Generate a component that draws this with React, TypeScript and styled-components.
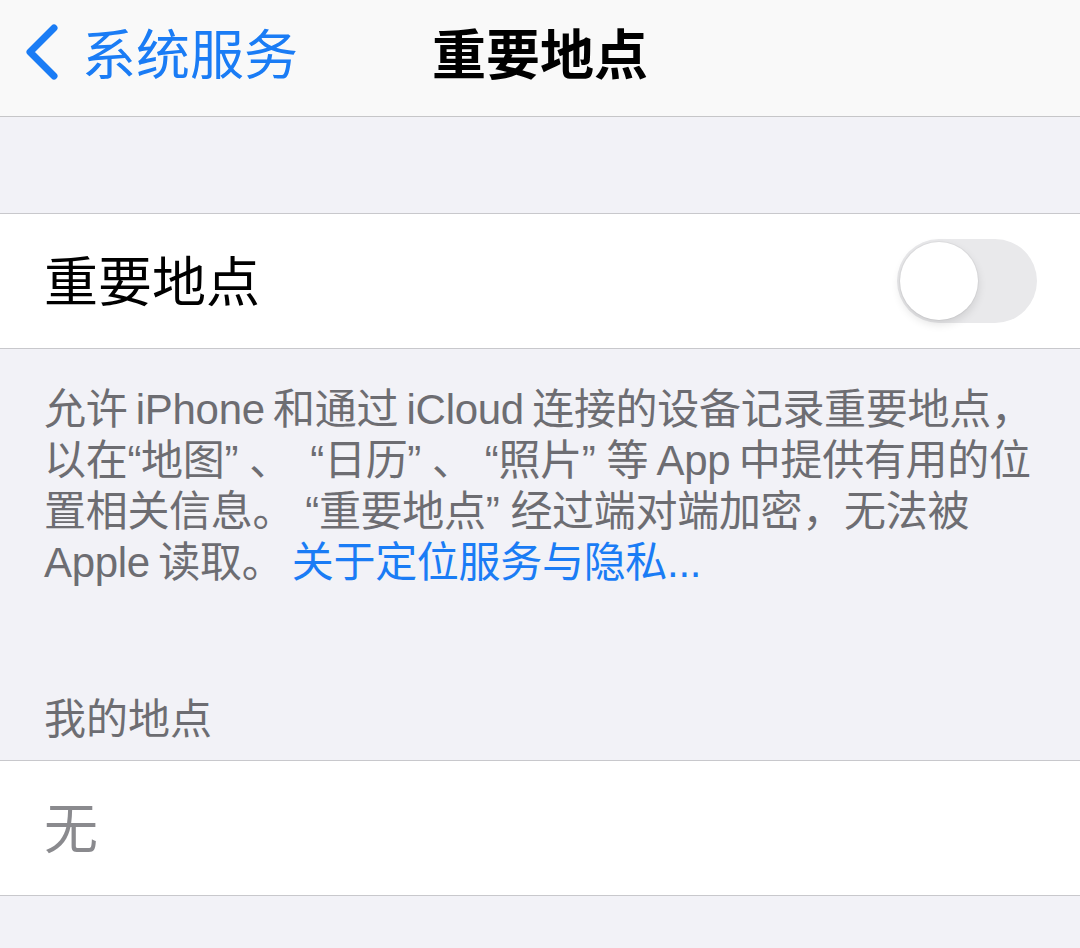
import React from 'react';
import styled, { createGlobalStyle } from 'styled-components';

const Global = createGlobalStyle`
	html, body {
		margin: 0;
		padding: 0;
		background: #f2f2f7;
	}
	body {
		font-family: 'Noto Sans CJK SC', 'Noto Sans', sans-serif;
		-webkit-font-smoothing: antialiased;
	}
`;

const Page = styled.div`
	width: 1080px;
	height: 948px;
	background: #f2f2f7;
	overflow: hidden;
`;

const NavBar = styled.div`
	height: 116px;
	background: #f9f9f9;
	border-bottom: 1px solid #c6c6c8;
	display: grid;
	grid-template-columns: 1fr auto 1fr;
	align-items: center;
`;

const Back = styled.div`
	display: flex;
	align-items: center;
	gap: 24px;
	padding-left: 24px;
	color: #1a7cf5;
	font-size: 54px;
	line-height: 1;
	padding-bottom: 12px;
`;

const Title = styled.div`
	font-size: 54px;
	font-weight: 700;
	color: #000;
	line-height: 1;
	padding-bottom: 12px;
`;

const Spacer = styled.div<{ h: number }>`
	height: ${p => p.h}px;
`;

const Cell = styled.div`
	height: 134px;
	background: #fff;
	border-top: 1px solid #c8c8cc;
	border-bottom: 1px solid #c8c8cc;
	display: flex;
	align-items: center;
	justify-content: space-between;
	padding: 0 44px 0 44px;
`;

const Label = styled.div<{ muted?: boolean }>`
	font-size: 54px;
	line-height: 1;
	color: ${p => (p.muted ? '#8a8a8e' : '#000')};
	padding-bottom: 4px;
`;

const Track = styled.div`
	width: 140px;
	height: 84px;
	border-radius: 42px;
	background: #e9e9eb;
	margin-right: -1px;
	padding: 3px;
	box-sizing: border-box;
`;

const Knob = styled.div`
	width: 78px;
	height: 78px;
	border-radius: 50%;
	background: #fff;
	box-shadow: 0 4px 10px rgba(0, 0, 0, 0.12), 0 0 0 1px rgba(0, 0, 0, 0.04);
`;

const Footer = styled.div`
	padding: 35px 0 0 44px;
	font-family: 'Liberation Sans', 'Noto Sans CJK SC', sans-serif;
	font-size: 42px;
	line-height: 51px;
	color: #6d6d72;
	word-spacing: -3px;
	letter-spacing: -0.3px;
`;

const Line = styled.div`
	white-space: nowrap;
`;

// curly quotes sit a little wider than the latin ones
const Quote = styled.span<{ open?: boolean; tight?: boolean }>`
	padding-left: ${p => (p.open && !p.tight ? 11 : 0)}px;
	padding-right: ${p => (p.open ? 0 : 11)}px;
`;

const Link = styled.span`
	color: #1a7cf5;
`;

const Header = styled.div`
	padding: 0 44px 19px 44px;
	font-size: 42px;
	line-height: 51px;
	color: #6d6d72;
`;

const q = (s: string, tight?: boolean) => (
	<>
		<Quote open tight={tight}>
			“
		</Quote>
		{s}
		<Quote>”</Quote>
	</>
);

export default function App() {
	return (
		<Page>
			<Global />
			<NavBar>
				<Back>
					<svg width="34" height="56" viewBox="0 0 34 56" fill="none">
						<path
							d="M30 4 L6 28 L30 52"
							stroke="#1a7cf5"
							strokeWidth="7"
							strokeLinecap="round"
							strokeLinejoin="round"
						/>
					</svg>
					<span>系统服务</span>
				</Back>
				<Title>重要地点</Title>
				<div />
			</NavBar>
			<Spacer h={96} />
			<Cell>
				<Label>重要地点</Label>
				<Track>
					<Knob />
				</Track>
			</Cell>
			<Footer>
				<Line>允许 iPhone 和通过 iCloud 连接的设备记录重要地点，</Line>
				<Line>
					以在{q('地图', true)}、&nbsp;{q('日历')}、{q('照片')}等 App 中提供有用的位
				</Line>
				<Line>置相关信息。{q('重要地点')}经过端对端加密，无法被</Line>
				<Line>
					Apple 读取。 <Link>关于定位服务与隐私...</Link>
				</Line>
			</Footer>
			<Spacer h={102} />
			<Header>我的地点</Header>
			<Cell>
				<Label muted>无</Label>
			</Cell>
		</Page>
	);
}
